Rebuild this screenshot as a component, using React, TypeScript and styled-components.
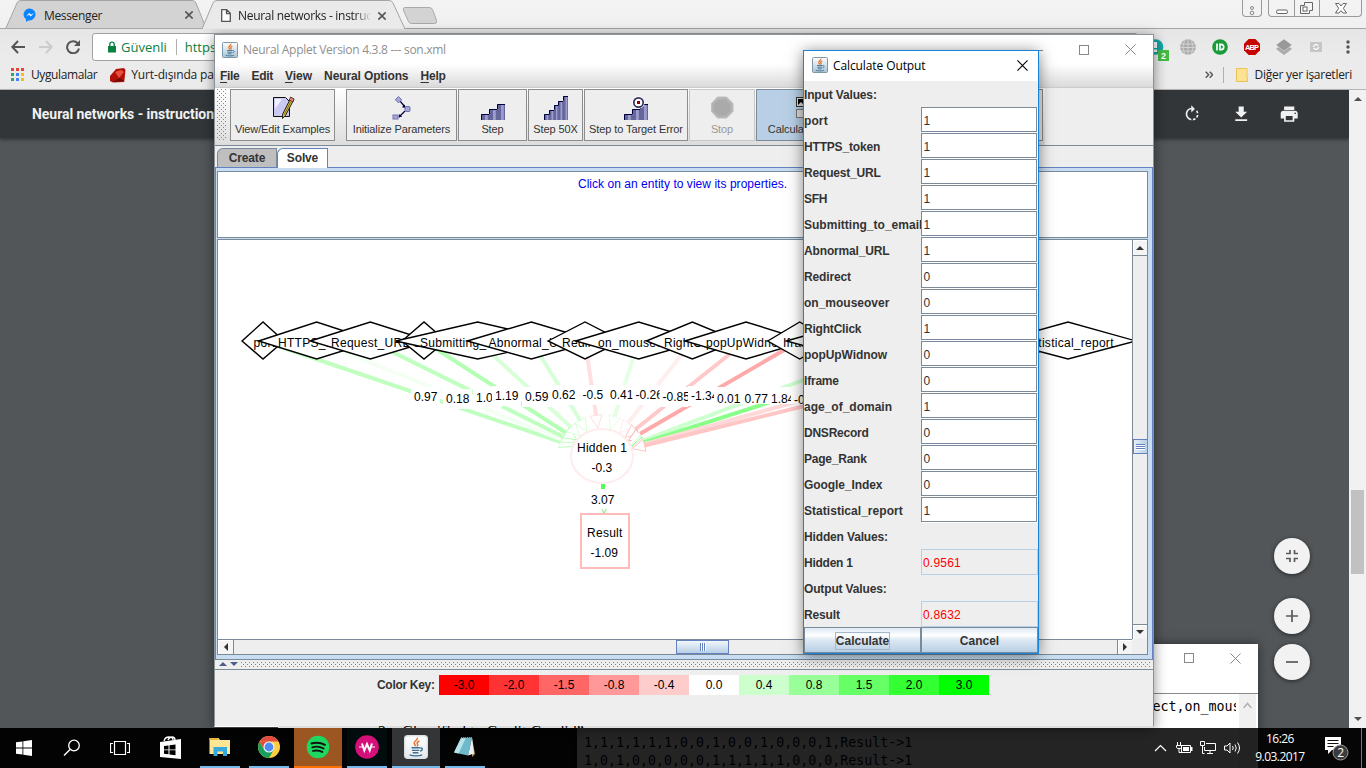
import React from 'react';
import styled, { createGlobalStyle, css } from 'styled-components';

const UI = "'Open Sans', 'Noto Sans', sans-serif";
const SWING = "'Liberation Sans', Arial, sans-serif";
const MONO = "'DejaVu Sans Mono', monospace";

const Global = createGlobalStyle`
  * { box-sizing: border-box; }
  body { margin: 0; overflow: hidden; background: #525659; }
  svg { display: block; flex: none; }
`;

const Desktop = styled.div`
  position: relative;
  width: 1366px;
  height: 768px;
  overflow: hidden;
  font-family: ${UI};
`;

const Txt = styled.span<{ $size?: number; $ls?: number; $color?: string; $bold?: boolean; $font?: string; $ml?: number }>`
  font-family: ${p => p.$font || UI};
  font-size: ${p => p.$size || 12}px;
  font-weight: ${p => (p.$bold ? 700 : 400)};
  letter-spacing: ${p => p.$ls || 0}px;
  color: ${p => p.$color || '#222'};
  margin-left: ${p => p.$ml || 0}px;
  white-space: pre;
  flex: none;
`;

/* ---------- Browser ---------- */

const Browser = styled.div`
  display: flex;
  flex-direction: column;
  width: 1366px;
  height: 728px;
  background: #525659;
`;

const TabStrip = styled.div`
  display: flex;
  height: 29px;
  padding-left: 6px;
  background: linear-gradient(#f3f3f3, #f0f0f0);
  border-bottom: 1px solid #a5a5a5;
`;

const Tab = styled.div<{ $w: number; $active?: boolean }>`
  position: relative;
  display: flex;
  align-items: center;
  width: ${p => p.$w}px;
  height: ${p => (p.$active ? 29 : 28)}px;
  padding: ${p => (p.$active ? '2px 0 0 12px' : '2px 0 0 17px')};
  z-index: ${p => (p.$active ? 2 : 1)};
`;

const TabShape = styled.svg`
  position: absolute;
  left: 0;
  top: 0;
  z-index: -1;
  overflow: visible;
`;

const TabTitle = styled(Txt)<{ $w: number; $fade?: boolean }>`
  width: ${p => p.$w}px;
  overflow: hidden;
  ${p => p.$fade && css`mask-image: linear-gradient(90deg, #000 88%, transparent);`}
`;

const Caption = styled.div`
  display: flex;
  gap: 6px;
  margin-left: auto;
  padding-right: 4px;
`;

const CaptionGroup = styled.div`
  display: flex;
  height: 17px;
  border: 1px solid #999;
  border-top: 0;
  border-radius: 0 0 4px 4px;
  & > * + * { border-left: 1px solid #999; }
`;

const CaptionBtn = styled.div<{ $w: number }>`
  display: flex;
  align-items: center;
  justify-content: center;
  width: ${p => p.$w}px;
`;

const AddressRow = styled.div`
  display: flex;
  align-items: center;
  height: 33px;
  padding: 3px 0 0 11px;
  background: linear-gradient(#e6e6e6, #ececec);
`;

const NavIcons = styled.div`
  display: flex;
  gap: 12px;
  width: 81px;
`;

const UrlBox = styled.div`
  display: flex;
  align-items: center;
  width: 1046px;
  height: 28px;
  padding-left: 14px;
  border: 1px solid #a2a2a2;
  border-radius: 3px;
  background: #fff;
`;

const Sep = styled.div<{ $m: string; $h: number }>`
  width: 1px;
  height: ${p => p.$h}px;
  margin: ${p => p.$m};
  background: #b0b0b0;
`;

const Extensions = styled.div`
  display: flex;
  align-items: center;
  gap: 16px;
  margin-left: 10px;
`;

const BookmarksRow = styled.div`
  display: flex;
  align-items: center;
  height: 28px;
  padding: 0 14px 2px 11px;
  background: #ebebeb;
  border-bottom: 1px solid #b5b5b5;
`;

const Push = styled.div`
  display: flex;
  align-items: center;
  margin-left: auto;
`;

const Viewer = styled.div`
  display: flex;
  flex: 1;
`;

const PdfPane = styled.div`
  display: flex;
  flex-direction: column;
  width: 1349px;
`;

const PdfBar = styled.div`
  display: flex;
  align-items: center;
  justify-content: space-between;
  height: 48px;
  padding: 0 48px 0 32px;
  background: #323639;
  box-shadow: 0 2px 3px rgba(0, 0, 0, 0.35);
`;

const PdfActions = styled.div`
  display: flex;
  gap: 24.5px;
`;

const PdfBody = styled.div`
  display: flex;
  flex: 1;
  justify-content: flex-end;
  padding: 400px 39px 0 0;
`;

const Fabs = styled.div`
  display: flex;
  flex-direction: column;
`;

const Fab = styled.div<{ $mt: number }>`
  display: flex;
  align-items: center;
  justify-content: center;
  width: 36px;
  height: 36px;
  margin-top: ${p => p.$mt}px;
  border-radius: 50%;
  background: #f2f2f2;
  box-shadow: 0 1px 4px rgba(0, 0, 0, 0.55);
`;

const PageScroll = styled.div`
  display: flex;
  flex-direction: column;
  align-items: center;
  width: 17px;
  padding: 6px 0 6px;
  background: #f1f1f1;
`;

const PageThumb = styled.div`
  width: 13px;
  height: 84px;
  margin: 388px 0 auto;
  background: #c1c1c1;
`;

const PageSliver = styled.div`
  position: absolute;
  left: 278px;
  top: 726px;
  width: 875px;
  height: 2px;
  padding-left: 100px;
  overflow: hidden;
  background: #ddd;
  font: 16px/12px 'Liberation Serif', serif;
  color: #000;
  white-space: pre;
`;

/* ---------- Notepad ---------- */

const Notepad = styled.div`
  position: absolute;
  left: 577px;
  top: 644px;
  width: 681px;
  height: 140px;
  background: #fff;
  box-shadow: 0 0 10px rgba(0, 0, 0, 0.5);
`;

const NotepadTitle = styled.div`
  display: flex;
  align-items: center;
  justify-content: flex-end;
  gap: 36px;
  height: 50px;
  padding: 0 17px 21px;
  border-bottom: 1px solid #8a8a8a;
`;

const NotepadBody = styled.div`
  display: flex;
  height: 90px;
`;

const NotepadText = styled.div`
  width: 659px;
  padding: 4px 0 0 7px;
  overflow: hidden;
  font-family: ${MONO};
  font-size: 13.3px;
  line-height: 18px;
  white-space: pre;
  color: #000;
`;

const NotepadScroll = styled.div`
  display: flex;
  justify-content: center;
  width: 17px;
  margin-left: 3px;
  padding-top: 8px;
  background: #f0f0f0;
`;

/* ---------- Applet window ---------- */

const Applet = styled.div`
  position: absolute;
  left: 214px;
  top: 34px;
  display: flex;
  flex-direction: column;
  width: 940px;
  height: 693px;
  border: 1px solid #8a929a;
  border-bottom-color: #fff;
  background: #eee;
  box-shadow: 0 2px 12px rgba(0, 0, 0, 0.45);
`;

const AppletTitle = styled.div`
  display: flex;
  align-items: center;
  height: 29px;
  padding: 0 17px 0 7px;
  background: #fff;
`;

const TitleButtons = styled.div`
  display: flex;
  align-items: center;
  gap: 36px;
  margin-left: auto;
`;

const MenuBar = styled.div`
  display: flex;
  align-items: center;
  gap: 12px;
  height: 24px;
  padding-left: 5px;
  background: linear-gradient(#fff, #dadada);
  border-bottom: 1px solid #ccc;
`;

const MenuItem = styled(Txt).attrs({ $font: SWING, $bold: true, $color: '#333' })`
  u { text-underline-offset: 2px; }
`;

const ToolBar = styled.div`
  display: flex;
  height: 58px;
  padding: 1px 0 4px 1px;
  gap: 1px;
  background: linear-gradient(#fff, #dcdcdc);
  background-size: 830px 58px;
  background-repeat: no-repeat;
  border-bottom: 1px solid #7a8a99;
`;

const Grip = styled.div`
  width: 11px;
  height: 52px;
  margin-right: 2px;
  background-image: conic-gradient(from 270deg at 1px 1px, #7a8a99 90deg, transparent 0), conic-gradient(from 270deg at 1px 1px, #7a8a99 90deg, transparent 0);
  background-size: 4px 4px;
  background-position: 1px 0, 3px 2px;
`;

const ToolButton = styled.div<{ $w: number; $mr?: number; $state?: 'off' | 'on' }>`
  display: flex;
  flex-direction: column;
  align-items: center;
  width: ${p => p.$w}px;
  height: 52px;
  margin-right: ${p => p.$mr || 0}px;
  padding-top: 5px;
  overflow: hidden;
  flex: none;
  border: 1px solid ${p => (p.$state === 'off' ? '#c8c8c8' : p.$state === 'on' ? '#7a8a99' : '#8c8c8c')};
  background: ${p => (p.$state === 'on' ? '#b8cfe5' : '#eee')};
  font: 11px/13px ${SWING};
  letter-spacing: -0.1px;
  color: ${p => (p.$state === 'off' ? '#999' : '#333')};
  white-space: pre;
  svg { margin-bottom: 3px; }
`;

const Tabs = styled.div`
  display: flex;
  align-items: flex-end;
  height: 22px;
  padding-left: 2px;
  border-bottom: 1px solid #6382bf;
`;

const PaneTab = styled.div<{ $w: number; $active?: boolean }>`
  width: ${p => p.$w}px;
  height: ${p => (p.$active ? 20 : 19)}px;
  margin-bottom: ${p => (p.$active ? -1 : 0)}px;
  border: 1px solid ${p => (p.$active ? '#6382bf' : '#7a8a99')};
  border-bottom: 0;
  border-top-left-radius: 6px 6px;
  background: ${p => (p.$active ? '#fff' : '#bfbfbf')};
  font: bold 12px/18px ${SWING};
  letter-spacing: -0.15px;
  color: #333;
  text-align: center;
`;

const TabPane = styled.div`
  display: flex;
  flex-direction: column;
  height: 492px;
  padding: 3px 4px 4px 1px;
  background: #c8ddf2;
  border-right: 1px solid #6382bf;
  border-left: 1px solid #6382bf;
  border-bottom: 1px solid #7a8a99;
`;

const InfoPane = styled.div`
  width: 931px;
  height: 67px;
  padding-top: 5px;
  border: 1px solid #7a8a99;
  background: #fff;
  font: 12px/14px ${SWING};
  letter-spacing: 0.04px;
  color: #0000f0;
  text-align: center;
`;

const ScrollPane = styled.div`
  display: grid;
  grid-template-columns: 914px 15px;
  grid-template-rows: 399px 15px;
  width: 931px;
  height: 416px;
  margin-top: 1px;
  border: 1px solid #7a8a99;
  background: #eee;
`;

const VScroll = styled.div`
  display: flex;
  flex-direction: column;
  align-items: center;
  border-left: 1px solid #7a8a99;
`;

const HScroll = styled.div`
  display: flex;
  align-items: center;
  border-top: 1px solid #7a8a99;
`;

const Stepper = styled.div<{ $w: number; $h: number; $side: string }>`
  display: flex;
  align-items: center;
  justify-content: center;
  width: ${p => p.$w}px;
  height: ${p => p.$h}px;
  flex: none;
  background: #f4f4f4;
  border-${p => p.$side}: 1px solid #7a8a99;
  box-shadow: inset 1px 1px #fff;
`;

const VThumb = styled.div`
  width: 14px;
  height: 15px;
  margin: 183px 0 auto;
  border: 1px solid #6382bf;
  border-right: 0;
  background: repeating-linear-gradient(#6382bf 0 1px, #fff 1px 2px) center / 9px 6px no-repeat, linear-gradient(90deg, #e6eff8, #b8cfe5);
`;

const HThumb = styled.div`
  width: 53px;
  height: 14px;
  margin: 0 auto 0 442px;
  border: 1px solid #6382bf;
  background: repeating-linear-gradient(90deg, #6382bf 0 1px, #fff 1px 2px) center / 6px 8px no-repeat, linear-gradient(#f2f7fc, #b8cfe5);
`;

const Divider = styled.div`
  display: flex;
  align-items: flex-start;
  gap: 3px;
  height: 10px;
  padding: 1px 0 0 4px;
  border-bottom: 1px solid #7a8a99;
`;

const DividerDots = styled.div`
  flex: 1;
  height: 7px;
  margin-right: 3px;
  background-image: conic-gradient(from 270deg at 1px 1px, #7a8a99 90deg, transparent 0), conic-gradient(from 270deg at 1px 1px, #7a8a99 90deg, transparent 0);
  background-size: 4px 4px;
  background-position: 0 1px, 2px 3px;
`;

const KeyRow = styled.div`
  display: flex;
  align-items: center;
  height: 20px;
  margin: 5px 0 0 162px;
`;

const KeyLabel = styled(Txt)`
  width: 62px;
`;

const KeyCell = styled.div<{ $bg: string }>`
  width: 50px;
  height: 20px;
  background: ${p => p.$bg};
  font: 12px/21px ${SWING};
  color: #000;
  text-align: center;
`;

/* ---------- Dialog ---------- */

const Dialog = styled.div`
  position: absolute;
  left: 803px;
  top: 50px;
  width: 236px;
  height: 604px;
  border: 1px solid #1883d7;
  background: #eee;
  box-shadow: 0 2px 14px rgba(0, 0, 0, 0.5);
`;

const DialogTitle = styled.div`
  display: flex;
  align-items: center;
  height: 30px;
  padding: 0 10px 2px 8px;
  background: #fff;
  justify-content: space-between;
`;

const TitleGroup = styled.div`
  display: flex;
  align-items: center;
  gap: 5px;
`;

const FormRow = styled.div`
  display: grid;
  grid-template-columns: 117px 117px;
  height: 26px;
`;

const Label = styled.div<{ $ls?: number }>`
  font: bold 12px/29px ${SWING};
  letter-spacing: ${p => p.$ls ?? -0.15}px;
  color: #333;
  white-space: nowrap;
`;

const Field = styled.div<{ $out?: boolean }>`
  height: ${p => (p.$out ? 26 : 25)}px;
  margin-right: ${p => (p.$out ? 0 : 1)}px;
  padding-left: ${p => (p.$out ? 1 : 1.5)}px;
  border: 1px solid ${p => (p.$out ? '#b8cfe5' : '#7a8a99')};
  background: ${p => (p.$out ? '#eee' : '#fff')};
  box-shadow: ${p => (p.$out ? 'none' : '1px 1px #fff')};
  font: 12px/27px ${SWING};
  color: ${p => (p.$out ? '#f00' : '#333')};
  letter-spacing: 0.2px;
`;

const Buttons = styled.div`
  display: grid;
  grid-template-columns: 117px 117px;
  height: 26px;
`;

const Button = styled.div`
  display: flex;
  align-items: center;
  justify-content: center;
  padding-top: 1px;
  border: 1px solid #7a8a99;
  background: linear-gradient(#dde8f3, #fff 30%, #dde8f3 50%, #b8cfe5);
  font: bold 12px/16px ${SWING};
  letter-spacing: 0;
  color: #333;
`;

const Focus = styled.span<{ $on?: boolean }>`
  outline: ${p => (p.$on ? '1px solid #a3b8cc' : 'none')};
`;

/* ---------- Taskbar ---------- */

const Taskbar = styled.div`
  position: absolute;
  left: 0;
  top: 728px;
  display: flex;
  width: 1366px;
  height: 40px;
  background: linear-gradient(90deg, rgba(0, 0, 0, 0.97) 577px, rgba(0, 0, 0, 0.86) 577px, rgba(0, 0, 0, 0.86) 1258px, #060606 1258px);
`;

const TaskItem = styled.div<{ $w: number; $bg?: string; $line?: string; $ml?: number }>`
  display: flex;
  align-items: center;
  justify-content: center;
  width: ${p => p.$w}px;
  height: 40px;
  margin-left: ${p => p.$ml || 0}px;
  background: ${p => p.$bg || 'transparent'};
  border-bottom: ${p => (p.$line ? `2px solid ${p.$line}` : '0')};
  flex: none;
`;

const Tray = styled.div`
  display: flex;
  align-items: center;
  gap: 7px;
  margin-left: auto;
`;

const Clock = styled.div`
  display: flex;
  flex-direction: column;
  align-items: center;
  width: 50px;
  margin: 0 12px 0 7px;
  font: 12px/18px ${UI};
  letter-spacing: -0.55px;
  color: #fff;
  white-space: nowrap;
`;

const ShowDesktop = styled.div`
  width: 5px;
  height: 40px;
  margin-left: 4px;
  border-left: 1px solid #777;
`;

/* ---------- Icons ---------- */

const JavaIcon = ({ size = 16, plain = false }: { size?: number; plain?: boolean }) => (
  <svg width={size} height={size} viewBox="0 0 16 16">
    <defs>
      <linearGradient id={plain ? 'jvp' : 'jv'} x1="0" y1="0" x2="0" y2="1">
        <stop offset="0" stopColor="#fff" />
        <stop offset="1" stopColor={plain ? '#e4e9ee' : '#a9c3d6'} />
      </linearGradient>
    </defs>
    <rect x=".5" y=".5" width="15" height="15" rx={plain ? 2 : 1} fill={plain ? 'url(#jvp)' : 'url(#jv)'} stroke={plain ? '#dde2e6' : '#7d97a8'} />
    <path d="M8.8 1.8c.8 1.6-2.400 2.300-2 3.800.1.8.9 1.100.9 1.900M10.300 4c-1.600.7-2 1.300-1.200 2.200.3.5 0 .9-.5 1.300" fill="none" stroke="#e8762d" strokeWidth={plain ? 1 : 1.3} />
    <path d="M5 8.500h5.600M5.300 10.200h4.800M5.800 11.800h3.800M3.700 13.200c2 .9 6.500.9 8.400 0M10.800 8.700c1.900-.4 1.900 1.600-.2 2.100" fill="none" stroke="#3f6f92" strokeWidth=".9" />
  </svg>
);

const Cross = ({ s = 10, c = '#555', w = 1.1 }: { s?: number; c?: string; w?: number }) => (
  <svg width={s} height={s} viewBox="0 0 10 10"><path d="M.4.4l9.2 9.2M9.6.4L.4 9.6" stroke={c} strokeWidth={w} fill="none" /></svg>
);

const Square = () => (
  <svg width="10" height="10"><rect x=".5" y=".5" width="9" height="9" fill="none" stroke="#888" /></svg>
);

const Triangle = ({ d, c = '#333' }: { d: 'u' | 'd' | 'l' | 'r'; c?: string }) => {
  const pts = { u: '0,5 8,5 4,1', d: '0,1 8,1 4,5', l: '5,0 5,8 1,4', r: '1,0 1,8 5,4' }[d];
  const v = d === 'u' || d === 'd';
  return <svg width={v ? 8 : 6} height={v ? 6 : 8}><polygon points={pts} fill={c} /></svg>;
};

const Stairs = ({ n, target }: { n: number; target?: boolean }) => {
  const w = 24 / n;
  const top = n === 3 ? 9 : 1;
  const rise = (19 - top) / (n - 1);
  return (
    <svg width="24" height="25" viewBox="0 0 24 25">
      {Array.from({ length: n }, (_, i) => {
        const y = Math.round(19 - i * rise);
        const x = Math.round(i * w);
        const x2 = Math.round((i + 1) * w);
        return (
          <g key={i}>
            <rect x={x} y={y} width={x2 - x} height={25 - y} fill="#66669a" />
            <rect x={x + (x2 - x) / 2} y={y + 1} width={(x2 - x) * 0.35} height={24 - y} fill="#9c9cce" />
            <path d={`M${x + 0.5} ${y + (i ? rise : 6)}V${y + 0.5}H${x2}`} fill="none" stroke="#000040" />
          </g>
        );
      })}
      {target && (
        <g>
          <circle cx="14.5" cy="7.5" r="6.2" fill="#fff" />
          <circle cx="14.5" cy="7.5" r="4.700" fill="#fff" stroke="#30305f" strokeWidth="1.700" />
          <rect x="13" y="6" width="3" height="3" fill="#8b0000" />
        </g>
      )}
    </svg>
  );
};

const EditIcon = () => (
  <svg width="24" height="25" viewBox="0 0 24 25">
    <path d="M2.500 2.500h12l4 4v15h-16z" fill="#c9c9f4" stroke="#111" />
    <path d="M4 4h7L4 14z" fill="#f0f0ff" />
    <path d="M20 2.500l3 1.800-8.500 16.200-3 3 .2-4.500z" fill="#d8c43c" stroke="#222" strokeWidth="1" />
    <path d="M19.800 6.500l-6.500 13" stroke="#8a6a1c" fill="none" />
    <path d="M19.500 2l3.500 2-1 3-3.600-2z" fill="#e08a8a" stroke="#522" strokeWidth=".8" />
  </svg>
);

const InitIcon = () => (
  <svg width="24" height="25" viewBox="0 0 24 25">
    <path d="M10 6l5 6M15 16l-6 6" stroke="#000040" strokeWidth="1.200" />
    <path d="M15.500 13l-3.600-.8 2.800-2.800zM8.500 22.500l1-3.600 2.600 2.600z" fill="#000040" />
    <path d="M8.500 1.500l3.200 3.200-3.200 3.200-3.200-3.200z" fill="#a6a6d8" stroke="#7272ae" />
    <rect x="15" y="11.500" width="5" height="5" rx="1" fill="#a6a6d8" stroke="#7272ae" />
    <rect x="3" y="20" width="5" height="4" fill="#a6a6d8" stroke="#7272ae" />
  </svg>
);

/* ---------- Network diagram ---------- */

const nodes: { t: string; h: number; x: number; w: number; l: string; lx: number; ly: number }[] = [
  { t: 'port', h: 21, x: 253.5, w: 0.97, l: '0.97', lx: 414, ly: 401 },
  { t: 'HTTPS_token', h: 58, x: 278, w: 0.18, l: '0.18', lx: 446, ly: 403 },
  { t: 'Request_URL', h: 60, x: 331, w: 1.0, l: '1.02', lx: 476, ly: 402 },
  { t: 'SFH', h: 22, x: 413, w: 1.19, l: '1.19', lx: 495, ly: 400 },
  { t: 'Submitting_to_email', h: 82, x: 420, w: 0.59, l: '0.59', lx: 525, ly: 401 },
  { t: 'Abnormal_URL', h: 64, x: 488.5, w: 0.62, l: '0.62', lx: 552, ly: 399 },
  { t: 'Redirect', h: 37, x: 562, w: -0.5, l: '-0.5', lx: 582.5, ly: 399 },
  { t: 'on_mouseover', h: 63, x: 598, w: 0.41, l: '0.41', lx: 610, ly: 399 },
  { t: 'RightClick', h: 46, x: 664, w: -0.26, l: '-0.26', lx: 635.5, ly: 399 },
  { t: 'popUpWidnow', h: 61, x: 706, w: -0.85, l: '-0.85', lx: 662.5, ly: 401 },
  { t: 'Iframe', h: 32, x: 783, w: -1.34, l: '-1.34', lx: 691, ly: 400 },
  { t: 'age_of_domain', h: 67, x: 815, w: 0.01, l: '0.01', lx: 717, ly: 403 },
  { t: 'DNSRecord', h: 52, x: 878, w: 0.77, l: '0.77', lx: 744.5, ly: 403 },
  { t: 'Page_Rank', h: 52, x: 931, w: 1.84, l: '1.84', lx: 771, ly: 403 },
  { t: 'Google_Index', h: 62, x: 980, w: -0.6, l: '-0.6', lx: 794, ly: 404 },
  { t: 'Statistical_report', h: 68, x: 1019.5, w: -0.9, l: '-0.9', lx: 825, ly: 404 },
];

const weightColor = (w: number) => {
  const v = Math.round(255 * (1 - Math.min(Math.abs(w) * 0.25, 1)));
  return w < 0 ? `rgb(255,${v},${v})` : `rgb(${v},255,${v})`;
};

const GraphText = styled.text<{ $ls?: number }>`
  font: 12px ${SWING};
  letter-spacing: ${p => p.$ls ?? 0.27}px;
  fill: #000;
`;

const Graph = () => {
  const cx = 602;
  const cy = 456;
  const edges = nodes.map((n, i) => {
    const x = 263 + i * 53.67;
    const dx = cx - x;
    const dy = cy - 341;
    const len = Math.hypot(dx, dy);
    const ux = dx / len;
    const uy = dy / len;
    const r = 1 / Math.sqrt((ux / 31) ** 2 + (uy / 28) ** 2);
    return { x, ux, uy, tx: cx - ux * r, ty: cy - uy * r, c: weightColor(n.w) };
  });
  return (
    <svg width="914" height="399" viewBox="218 240 914 399">
      <rect x="218" y="240" width="914" height="399" fill="#fff" />
      {edges.map((e, i) => (
        <line key={i} x1={e.x} y1={341} x2={e.tx - e.ux * 12} y2={e.ty - e.uy * 12} stroke={e.c} strokeWidth={4} />
      ))}
      {edges.map((e, i) => {
        const bx = e.tx - e.ux * 13;
        const by = e.ty - e.uy * 13;
        return (
          <polygon
            key={i}
            points={`${e.tx},${e.ty} ${bx - e.uy * 6},${by + e.ux * 6} ${bx + e.uy * 6},${by - e.ux * 6}`}
            fill="#fff"
            stroke={e.c}
          />
        );
      })}
      {nodes.map((n, i) => (
        <g key={n.t}>
          <rect x={n.lx - 3} y={i > 10 ? 387 : n.ly - 14} width={29} height={i > 10 ? 17 : 20} fill="#fff" />
          <GraphText $ls={0} x={n.lx} y={n.ly}>{n.l}</GraphText>
        </g>
      ))}
      {nodes.map((n, i) => {
        const x = edges[i].x;
        return (
          <g key={n.t}>
            <polygon points={`${x - n.h},341 ${x},322 ${x + n.h},341 ${x},359`} fill="#fff" stroke="#000" strokeWidth={1.4} />
            <GraphText x={n.x} y={347}>{n.t}</GraphText>
          </g>
        );
      })}
      <ellipse cx="602" cy="456" rx="31" ry="27" fill="#fff" stroke={weightColor(-0.3)} strokeWidth="2" />
      <GraphText x="577" y="452">Hidden 1</GraphText>
      <GraphText $ls={0} x="591.5" y="472">-0.3</GraphText>
      <rect x="601" y="484" width="4" height="5" fill="#50ff50" />
      <GraphText $ls={0} x="591" y="504">3.07</GraphText>
      <path d="M602 509l2 4 2.500-4" fill="none" stroke="#70f070" />
      <rect x="581" y="514" width="48" height="54" fill="#fff" stroke={weightColor(-1.09)} strokeWidth="2" />
      <GraphText x="587" y="537">Result</GraphText>
      <GraphText $ls={0} x="590.500" y="557">-1.09</GraphText>
    </svg>
  );
};

const inputs: [string, string, number][] = [
  ['port', '1', 0.1], ['HTTPS_token', '1', -0.18], ['Request_URL', '1', -0.18], ['SFH', '1', -0.3],
  ['Submitting_to_email', '1', 0.02], ['Abnormal_URL', '1', -0.15], ['Redirect', '0', -0.15],
  ['on_mouseover', '0', 0], ['RightClick', '1', -0.2], ['popUpWidnow', '0', -0.08], ['Iframe', '0', -0.2],
  ['age_of_domain', '1', 0], ['DNSRecord', '0', -0.23], ['Page_Rank', '0', -0.23], ['Google_Index', '0', -0.08],
  ['Statistical_report', '1', 0.04],
];

const keyColors: [string, string][] = [
  ['-3.0', '#f00'], ['-2.0', '#f33'], ['-1.5', '#f66'], ['-0.8', '#f99'], ['-0.4', '#fcc'], ['0.0', '#fff'],
  ['0.4', '#cfc'], ['0.8', '#9f9'], ['1.5', '#6f6'], ['2.0', '#3f3'], ['3.0', '#0f0'],
];

const appColors = ['#ea4335', '#ea4335', '#ea4335', '#34a853', '#4285f4', '#fbbc05', '#34a853', '#4285f4', '#fbbc05'];

const BrowserWindow = () => (
  <Browser>
    <TabStrip>
      <Tab $w={203}>
        <TabShape width="203" height="28">
          <path d="M0 28L11 3Q12 .5 15 .5H186Q189 .5 190 3L200 28" fill="#d3d3d3" stroke="#a5a5a5" />
        </TabShape>
        <svg width="14" height="14" viewBox="0 0 14 14">
          <path d="M7 .5a6.300 6 0 0 0-4 10.700V14l2.300-1.500A6.300 6 0 1 0 7 .5z" fill="#0a84ff" />
          <path d="M3 8.500l3.200-3.400 1.800 1.700 3-1.700-3.200 3.300L6 6.800z" fill="#fff" />
        </svg>
        <TabTitle $w={141} $ml={7} $ls={-0.35}>Messenger</TabTitle>
        <Cross s={8} w={2} />
      </Tab>
      <Tab $w={190} $active>
        <TabShape width="200" height="29">
          <path d="M-7 29L4 3Q5 .5 8 .5H180Q183 .5 184 3L196 29" fill="#eaeaea" stroke="#a5a5a5" />
          <path d="M-6 28.500H195" stroke="#e6e6e6" />
        </TabShape>
        <svg width="10" height="13" viewBox="0 0 10 13"><path d="M.7.700h5l3.600 3.600v8H.7zM5.500.700v4h4" fill="#fff" stroke="#555" strokeWidth="1.300" /></svg>
        <TabTitle $w={133} $fade $ml={7} $ls={-0.3}>Neural networks - instructions</TabTitle>
        <svg width="7" height="1" />
        <Cross s={8} w={2} />
      </Tab>
      <svg width="38" height="28" viewBox="-2 0 38 28">
        <path d="M3.500 7.500h25q2 0 3 2l4 11q1 3-2 3h-23q-2 0-3-2l-5-11q-1-3 1-3z" fill="#d3d3d3" stroke="#a9a9a9" />
      </svg>
      <Caption>
        <CaptionGroup>
          <CaptionBtn $w={18}>
            <svg width="6" height="16"><circle cx="3" cy="8" r="1.500" fill="none" stroke="#888" /><circle cx="3" cy="13" r="1.800" fill="none" stroke="#888" /></svg>
          </CaptionBtn>
        </CaptionGroup>
        <CaptionGroup>
          <CaptionBtn $w={25}><svg width="12" height="14"><rect x=".5" y="9" width="11" height="3.500" rx="1.500" fill="#fff" stroke="#666" /></svg></CaptionBtn>
          <CaptionBtn $w={25}><svg width="14" height="13"><path d="M4.500.500h8v8h-3v3h-9v-8h4z" fill="#f5f5f5" stroke="#666" /><rect x="3" y="5" width="4" height="4" fill="#fff" stroke="#666" /></svg></CaptionBtn>
          <CaptionBtn $w={42}><svg width="12" height="11"><path d="M.5.500h3.500l2 2.500 2-2.500h3.500L8.300 5.300l3.200 4.700H8L6 7.700 4 10H.5l3.200-4.700z" fill="#fff" stroke="#666" /></svg></CaptionBtn>
        </CaptionGroup>
      </Caption>
    </TabStrip>
    <AddressRow>
      <NavIcons>
        <svg width="15" height="14" viewBox="0 0 15 14"><path d="M14 7H1.500M7 1L1.300 7 7 13" fill="none" stroke="#555" strokeWidth="2" /></svg>
        <svg width="15" height="14" viewBox="0 0 15 14"><path d="M1 7h12.500M8 1l5.700 6L8 13" fill="none" stroke="#ccc" strokeWidth="2" /></svg>
        <svg width="16" height="14" viewBox="0 0 16 14"><path d="M12.700 3.400A6 6 0 1 0 14 8.500" fill="none" stroke="#555" strokeWidth="2" /><path d="M15 0v6H9z" fill="#555" /></svg>
      </NavIcons>
      <UrlBox>
        <svg width="10" height="12" viewBox="0 0 10 12"><rect x="1" y="5" width="8" height="6.500" fill="#0b8043" /><path d="M2.800 5V3.300a2.200 2.200 0 0 1 4.400 0V5" fill="none" stroke="#0b8043" strokeWidth="1.400" /></svg>
        <Txt $size={13} $ls={0} $ml={4} $color="#0b8043">Güvenli</Txt>
        <Sep $h={16} $m="0 8px 0 9px" />
        <Txt $size={13} $ls={0} $color="#0b8043">https</Txt>
      </UrlBox>
      <Extensions>
        <svg width="16" height="24" viewBox="0 0 16 24" overflow="visible">
          <circle cx="7.500" cy="12" r="7.800" fill="#12a5a5" />
          <rect x="6" y="7" width="3" height="6" fill="#fff" /><rect x="6" y="14.500" width="3" height="2.500" fill="#fff" />
          <rect x="10" y="15" width="11" height="11" fill="#44bb44" />
          <text x="13" y="24" fontSize="9" fontWeight="700" fill="#fff" fontFamily={SWING}>2</text>
        </svg>
        <svg width="16" height="16" viewBox="0 0 16 16"><circle cx="8" cy="8" r="7.800" fill="#aaa" /><path d="M1 5h14M0 8.500h16M1 12h14M8 0v16M5 1Q1 8 5 15M11 1q4 7 0 14" stroke="#d2d2d2" fill="none" /></svg>
        <svg width="16" height="16" viewBox="0 0 16 16"><circle cx="8" cy="8" r="7.800" fill="#1c9b3c" /><path d="M5 4.500v7M8 5.400h1.300a2.400 2.600 0 0 1 0 5.200H8z" fill="none" stroke="#fff" strokeWidth="1.700" /></svg>
        <svg width="16" height="16" viewBox="0 0 16 16"><path d="M4.700 0h6.600L16 4.700v6.600L11.300 16H4.700L0 11.300V4.700z" fill="#c70000" /><text x="1" y="11" fontSize="7.500" textLength="14" fontWeight="700" fill="#fff" fontFamily={SWING}>ABP</text></svg>
        <svg width="16" height="16" viewBox="0 0 16 16"><path d="M8 4l8 6-8 6-8-6z" fill="#aaa" /><path d="M8 0l8 6-8 6-8-6z" fill="#989898" stroke="#e8e8e8" strokeWidth=".5" /></svg>
        <svg width="16" height="16" viewBox="0 0 16 16"><rect x="2" y="3" width="12" height="10" rx="1" fill="#c6c6c6" /><path d="M5.500 8a2.500 2.500 0 0 1 4.700-1M10.500 8a2.500 2.500 0 0 1-4.700 1" fill="none" stroke="#fff" strokeWidth="1.300" /></svg>
        <svg width="16" height="16" viewBox="0 0 16 16"><g fill="#555"><circle cx="8" cy="3" r="1.700" /><circle cx="8" cy="8" r="1.700" /><circle cx="8" cy="13" r="1.700" /></g></svg>
      </Extensions>
    </AddressRow>
    <BookmarksRow>
      <svg width="13" height="13">{appColors.map((c, i) => <rect key={i} x={(i % 3) * 5} y={Math.floor(i / 3) * 5} width="3" height="3" fill={c} />)}</svg>
      <Txt $ml={7} $ls={-0.4}>Uygulamalar</Txt>
      <svg width="34" height="16" viewBox="-13 0 34 16"><path d="M0 9L6 2l8-1 1.500 2-1.300 12L3 15.500 0 14z" fill="#b01208" /><path d="M5 5l6-2 3 2-5 6z" fill="#e8503c" /><path d="M3 15l6-4 5 3z" fill="#6e0c06" /></svg>
      <Txt $ls={-0.15}>Yurt-dışında para</Txt>
      <Push>
        <svg width="8" height="8"><path d="M.7.700L3.700 3.700.7 6.700M4.700.700l3 3-3 3" fill="none" stroke="#555" strokeWidth="1.400" /></svg>
        <Sep $h={16} $m="0 12px 0 10px" />
        <svg width="12" height="14"><path d="M.5.500h10.500v9.500h.5v3.500H.5z" fill="#fde293" stroke="#eac35a" /></svg>
        <Txt $ml={7} $ls={-0.27}>Diğer yer işaretleri</Txt>
      </Push>
    </BookmarksRow>
    <Viewer>
      <PdfPane>
        <PdfBar>
          <Txt $font="Roboto, sans-serif" $size={14} $bold $color="#f1f1f1" $ls={-0.05}>Neural networks - instructions</Txt>
          <PdfActions>
            <svg width="24" height="24" viewBox="0 0 24 24" fill="#f1f1f1"><g transform="translate(2.500 2.500) scale(.8)"><path d="M15.550 5.550L11 1v3.070C7.060 4.560 4 7.920 4 12s3.050 7.440 7 7.930v-2.020c-2.840-.480-5-2.940-5-5.910s2.160-5.430 5-5.910V10l4.550-4.450zM19.930 11a7.900 7.900 0 0 0-1.620-3.890l-1.420 1.420c.54.75.88 1.600 1.020 2.470h2.020zM13 17.900v2.020c1.390-.17 2.740-.71 3.900-1.610l-1.440-1.440c-.75.54-1.590.89-2.460 1.030zm3.890-2.420l1.420 1.410c.9-1.160 1.450-2.500 1.620-3.890h-2.020c-.14.870-.48 1.720-1.020 2.480z" /></g></svg>
            <svg width="24" height="24" viewBox="0 0 24 24" fill="#f1f1f1"><g transform="translate(2 2) scale(.85)"><path d="M19 9h-4V3H9v6H5l7 7 7-7zM5 18v2h14v-2H5z" /></g></svg>
            <svg width="24" height="24" viewBox="0 0 24 24" fill="#f1f1f1"><g transform="translate(2 2) scale(.85)"><path d="M19 8H5c-1.660 0-3 1.340-3 3v6h4v4h12v-4h4v-6c0-1.660-1.340-3-3-3zm-3 11H8v-5h8v5zm3-7c-.55 0-1-.45-1-1s.45-1 1-1 1 .45 1 1-.45 1-1 1zm-1-9H6v4h12V3z" /></g></svg>
          </PdfActions>
        </PdfBar>
        <PdfBody>
          <Fabs>
            <Fab $mt={0}><svg width="12" height="12"><path d="M0 3.500h4V0M8.500 0v3.500H12M0 8.500h4V12M8.500 12V8.500H12" fill="none" stroke="#5a5a5a" strokeWidth="1.700" /></svg></Fab>
            <Fab $mt={24}><svg width="12" height="12"><path d="M0 6h12M6 0v12" stroke="#5a5a5a" strokeWidth="1.700" /></svg></Fab>
            <Fab $mt={10}><svg width="12" height="12"><path d="M0 6h12" stroke="#5a5a5a" strokeWidth="1.700" /></svg></Fab>
          </Fabs>
        </PdfBody>
      </PdfPane>
      <PageScroll>
        <Triangle d="u" c="#505050" />
        <PageThumb />
        <Triangle d="d" c="#505050" />
      </PageScroll>
    </Viewer>
  </Browser>
);

const AppletWindow = () => (
  <Applet>
    <AppletTitle>
      <JavaIcon />
      <Txt $ml={5} $ls={-0.29} $color="#909090">Neural Applet Version 4.3.8 --- son.xml</Txt>
      <TitleButtons>
        <svg width="10" height="10"><path d="M0 5.500h10" stroke="#888" /></svg>
        <Square />
        <Cross s={11} c="#888" w={0.9} />
      </TitleButtons>
    </AppletTitle>
    <MenuBar>
      <MenuItem $ls={-0.3}><u>F</u>ile</MenuItem>
      <MenuItem $ls={-0.3}>Edit</MenuItem>
      <MenuItem><u>V</u>iew</MenuItem>
      <MenuItem $ls={-0.12}>Neural Options</MenuItem>
      <MenuItem $ls={-0.2}><u>H</u>elp</MenuItem>
    </MenuBar>
    <ToolBar>
      <Grip />
      <ToolButton $w={105} $mr={10}><EditIcon />View/Edit Examples</ToolButton>
      <ToolButton $w={111}><InitIcon />Initialize Parameters</ToolButton>
      <ToolButton $w={69}><Stairs n={3} />Step</ToolButton>
      <ToolButton $w={55}><Stairs n={5} />Step 50X</ToolButton>
      <ToolButton $w={104}><Stairs n={3} target />Step to Target Error</ToolButton>
      <ToolButton $w={66} $state="off">
        <svg width="24" height="25" viewBox="0 0 24 25"><path d="M7.500 2h9L23 8.500v8L16.500 23h-9L1.500 16.500v-8z" fill="#b4b4b4" stroke="#bebebe" /><path d="M8.500 4.500h7l5 5v6l-5 5h-7l-5-5v-6z" fill="#aaa" /></svg>
        Stop
      </ToolButton>
      <ToolButton $w={104} $state="on">
        <svg width="24" height="25" viewBox="0 0 24 25"><rect x=".5" y="2.500" width="22" height="9" fill="#ddd" stroke="#333" /><path d="M2 4v6l3-3 3 3V4z" /><rect x=".5" y="14.500" width="22" height="8" fill="#ddd" stroke="#777" /></svg>
        Calculate Output
      </ToolButton>
      <ToolButton $w={182}>{' '}</ToolButton>
    </ToolBar>
    <Tabs>
      <PaneTab $w={60}>Create</PaneTab>
      <PaneTab $w={51} $active>Solve</PaneTab>
    </Tabs>
    <TabPane>
      <InfoPane>Click on an entity to view its properties.</InfoPane>
      <ScrollPane>
        <Graph />
        <VScroll>
          <Stepper $w={14} $h={16} $side="bottom"><Triangle d="u" /></Stepper>
          <VThumb />
          <Stepper $w={14} $h={15} $side="top"><Triangle d="d" /></Stepper>
        </VScroll>
        <HScroll>
          <Stepper $w={16} $h={14} $side="right"><Triangle d="l" /></Stepper>
          <HThumb />
          <Stepper $w={15} $h={14} $side="left"><Triangle d="r" /></Stepper>
        </HScroll>
      </ScrollPane>
    </TabPane>
    <Divider>
      <Triangle d="u" c="#4a5f8c" />
      <Triangle d="d" c="#4a5f8c" />
      <DividerDots />
    </Divider>
    <KeyRow>
      <KeyLabel $font={SWING} $bold $color="#333" $ls={-0.3}>Color Key:</KeyLabel>
      {keyColors.map(([t, c]) => <KeyCell key={t} $bg={c}>{t}</KeyCell>)}
    </KeyRow>
  </Applet>
);

const CalculateDialog = () => (
  <Dialog>
    <DialogTitle>
      <TitleGroup>
        <JavaIcon />
        <Txt $color="#000" $ls={-0.1}>Calculate Output</Txt>
      </TitleGroup>
      <Cross s={11} c="#000" w={1} />
    </DialogTitle>
    <FormRow><Label>Input Values:</Label></FormRow>
    {inputs.map(([k, v, ls]) => <FormRow key={k}><Label $ls={ls}>{k}</Label><Field>{v}</Field></FormRow>)}
    <FormRow><Label>Hidden Values:</Label></FormRow>
    <FormRow><Label $ls={-0.25}>Hidden 1</Label><Field $out>0.9561</Field></FormRow>
    <FormRow><Label>Output Values:</Label></FormRow>
    <FormRow><Label>Result</Label><Field $out>0.8632</Field></FormRow>
    <Buttons>
      <Button><Focus $on>Calculate</Focus></Button>
      <Button>Cancel</Button>
    </Buttons>
  </Dialog>
);

const TaskbarRow = () => (
  <Taskbar>
    <TaskItem $w={48}><svg width="16" height="16"><path d="M0 2.300l6.500-.900v6.200H0zM7.300 1.300L16 0v7.600H7.300zM0 8.400h6.500v6.200L0 13.700zM7.300 8.400H16V16l-8.700-1.300z" fill="#fff" /></svg></TaskItem>
    <TaskItem $w={48}><svg width="18" height="18"><circle cx="11" cy="6.500" r="5.300" fill="none" stroke="#fff" strokeWidth="1.300" /><path d="M7 10.500L1 16.500" stroke="#fff" strokeWidth="1.500" /></svg></TaskItem>
    <TaskItem $w={48}><svg width="20" height="15"><path d="M4.500.500h11v13h-11zM3 2.500H.500v9H3M17 2.500h2.500v9H17" fill="none" stroke="#fff" strokeWidth="1.200" /></svg></TaskItem>
    <TaskItem $w={53}>
      <svg width="22" height="24"><path d="M0 6l21-3v20L0 21z" fill="#fff" /><path d="M4 5Q5 1 9 1t4 3M8 4q1-3 4-3 3 0 3 3" fill="none" stroke="#fff" strokeWidth="1.300" /><path d="M4 10l4.500-.600v4H4zM9.500 9.300l6-.800v5h-6zM4 14.300h4.500v4l-4.500-.500zM9.500 14.300h6v4.900l-6-.700z" fill="#000" /></svg>
    </TaskItem>
    <TaskItem $w={40} $ml={3} $line="#76b9ed">
      <svg width="22" height="20"><path d="M.5 1h9l1.500 2h10v14H.5z" fill="#ffe694" /><path d="M.5 1h8l1.500 2H.5z" fill="#e8b63a" /><path d="M4.500 19v-9h13.500v9h-4v-4.500h-5.500V19z" fill="#35a8e0" /></svg>
    </TaskItem>
    <TaskItem $w={40} $ml={9} $line="#76b9ed">
      <svg width="22" height="22" viewBox="0 0 22 22"><circle cx="11" cy="11" r="11" fill="#ffcd40" /><path d="M1.500 5.500A11 11 0 0 1 20.500 5.500H11z" fill="#e04a3f" /><path d="M1.500 5.500A11 11 0 0 0 11 22l4.800-8.300L11 11l-4.800 2.700z" fill="#17a05d" /><path d="M1.500 5.500L6.300 13.700 11 5.500z" fill="#e04a3f" /><circle cx="11" cy="11" r="5" fill="#4c8bf5" stroke="#f1f1f1" strokeWidth="1.200" /></svg>
    </TaskItem>
    <TaskItem $w={48} $ml={5} $bg="#9b5622" $line="#ff7200">
      <svg width="24" height="24"><circle cx="12" cy="12" r="11.300" fill="#1ed760" /><path d="M5.500 8.500q7-2 13.500 1.300M6.300 12.300q6-1.700 11.300 1.200M7 15.900q5-1.300 9.300 1" fill="none" stroke="#111" strokeWidth="1.900" strokeLinecap="round" /></svg>
    </TaskItem>
    <TaskItem $w={40} $ml={5} $bg="#020c0f" $line="#76b9ed">
      <svg width="24" height="24"><circle cx="12" cy="12" r="11.800" fill="#d5107a" /><path d="M7 8.500l2.300 7L12 9l2.700 6.500 2.300-7" fill="none" stroke="#fff" strokeWidth="2" /><path d="M4 12h4M16.500 12H20" stroke="#fff" strokeWidth="1.200" /></svg>
    </TaskItem>
    <TaskItem $w={48} $ml={5} $bg="#343536" $line="#76b9ed"><JavaIcon size={24} plain /></TaskItem>
    <TaskItem $w={40} $ml={5} $line="#76b9ed">
      <svg width="24" height="22"><path d="M19 2l3 16-3 3z" fill="#b89a62" /><path d="M8 2l11-.500-4 18-14-3z" fill="#6fb9cc" /><path d="M8 2l5-.200-7.500 15.700-4.500-1z" fill="#b7e3ea" /><path d="M19 1.500l2 16-6 2z" fill="#e8f2f4" /><path d="M8 2h11" stroke="#aaa" strokeWidth="1.500" strokeDasharray="1 1" /></svg>
    </TaskItem>
    <Tray>
      <svg width="15" height="8"><path d="M1 7l5.500-5.500L12 7" fill="none" stroke="#fff" strokeWidth="1.200" /></svg>
      <svg width="17" height="13"><path d="M5.500 3.500h9v7h-9z" fill="none" stroke="#fff" /><rect x="7" y="5" width="6" height="4" fill="#fff" /><rect x="15" y="5" width="1.500" height="4" fill="#fff" /><path d="M1.500 0v3M4.500 0v3M.500 3.500h5v2q0 1-2.500 1t-2.500-1zM3 6v4.500h3" fill="none" stroke="#fff" /></svg>
      <svg width="17" height="14"><path d="M6 2.500h9.500v7H4.500V6M7 12.500h6M10 10v2" fill="none" stroke="#fff" /><path d="M.500.500h4v4h-4zM2.500 5v7.500h2" fill="none" stroke="#fff" /></svg>
      <svg width="17" height="14"><path d="M.500 5h2.500l3-3v10L3 9H.500z" fill="none" stroke="#fff" /><path d="M8.500 5q1.500 2 0 4M11 3.500q2.500 3.500 0 7M13.500 1.500q4 5.500 0 11" fill="none" stroke="#fff" /></svg>
      <Clock><span>16:26</span><span>9.03.2017</span></Clock>
      <svg width="26" height="26"><path d="M1 2h16v13H8l-4 4v-4H1z" fill="#fff" /><path d="M3.500 5.500h11M3.500 8.500h11M3.500 11.500h6" stroke="#111" /><circle cx="16.500" cy="17.500" r="7.500" fill="#3c3c3c" stroke="#999" /><text x="13.200" y="22" fontSize="12" fill="#fff" fontFamily={UI}>2</text></svg>
      <ShowDesktop />
    </Tray>
  </Taskbar>
);

export default function App() {
  return (
    <Desktop>
      <Global />
      <BrowserWindow />
      <Notepad>
        <NotepadTitle><Square /><Cross s={11} c="#888" w={0.9} /></NotepadTitle>
        <NotepadBody>
          <NotepadText>
            {'port,HTTPS_token,Request_URL,SFH,Submitting_to_email,Abnormal_URL,Redirect,on_mouseover\n\n'}
            {'1,1,1,1,1,1,0,0,1,0,0,1,0,0,0,1,Result->1\n1,0,1,0,0,0,0,0,1,1,1,1,1,0,0,0,Result->1'}
          </NotepadText>
          <NotepadScroll><svg width="9" height="7"><path d="M.500 6l4-4.500 4 4.500" fill="none" stroke="#b0b0b0" strokeWidth="1.500" /></svg></NotepadScroll>
        </NotepadBody>
      </Notepad>
      <AppletWindow />
      <PageSliver>2.   Classified to Credit Candid”</PageSliver>
      <CalculateDialog />
      <TaskbarRow />
    </Desktop>
  );
}
